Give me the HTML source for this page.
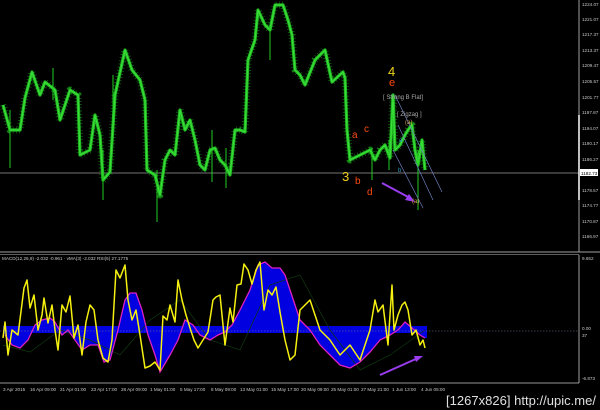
<!DOCTYPE html>
<html><head><meta charset="utf-8"><style>
html,body{margin:0;padding:0;background:#000;width:600px;height:410px;overflow:hidden}
svg{display:block}
text{font-family:"Liberation Sans",sans-serif}
.ax{fill:#c8c8c8;font-size:4.6px}
</style></head><body>
<svg width="600" height="410" viewBox="0 0 600 410">
<defs>
<polyline id="pp" fill="none" points="3,105 10,130 20,130 25,98 32,72 40,95 45,82 55,90 60,120 70,90 78,95 80,155 90,150 95,115 100,135 103,180 110,172 115,95 125,50 132,70 140,80 145,100 147,170 155,175 160,195 165,160 170,150 175,155 180,110 185,130 190,120 195,140 200,165 205,170 210,150 215,148 220,160 225,165 230,175 235,130 240,130 245,132 248,60 255,40 258,10 265,25 270,30 275,5 283,5 288,20 292,35 295,70 300,75 305,85 315,60 325,50 332,82 343,72 345,78 347,130 350,160 360,155 370,150 375,160 380,150 385,145 390,158 393,95 395,150 400,145 405,135 408,130 412,125 415,150 418,165 422,140 425,170"/>
</defs>
<rect width="600" height="410" fill="#000"/>
<line x1="0" y1="173" x2="579" y2="173" stroke="#9a9a9a" stroke-width="0.8"/>
<use href="#pp" stroke="#137a13" stroke-width="7" stroke-dasharray="0.6 2.6" stroke-linejoin="round"/>
<use href="#pp" stroke="#22b822" stroke-width="3.2" stroke-linejoin="round"/>
<use href="#pp" stroke="#3ae03a" stroke-width="1.2" stroke-linejoin="round"/>
<g stroke="#22cc22" stroke-width="1">
<line x1="10" y1="110" x2="10" y2="168"/><line x1="53" y1="68" x2="53" y2="100"/><line x1="103" y1="150" x2="103" y2="200"/>
<line x1="113" y1="75" x2="113" y2="120"/><line x1="157" y1="170" x2="157" y2="222"/><line x1="212" y1="130" x2="212" y2="182"/>
<line x1="226" y1="148" x2="226" y2="188"/><line x1="270" y1="25" x2="270" y2="60"/><line x1="372" y1="148" x2="372" y2="180"/>
<line x1="389" y1="140" x2="389" y2="170"/><line x1="418" y1="150" x2="418" y2="210"/>
</g>
<g stroke="#7080c0" stroke-width="0.7">
<line x1="395" y1="95" x2="442" y2="192"/><line x1="398" y1="125" x2="433" y2="200"/><line x1="393" y1="150" x2="423" y2="208"/>
</g>
<g stroke="#9a3cf0" stroke-width="2" fill="#9a3cf0">
<line x1="382" y1="183" x2="410" y2="198"/><polygon points="415,202 405,200 409,194" stroke="none"/>
<line x1="380" y1="375" x2="418" y2="358"/><polygon points="423,356 414,356 416,362" stroke="none"/>
</g>
<g>
<text x="388" y="76" fill="#f0d020" font-size="13">4</text>
<text x="389" y="86" fill="#ff4a10" font-size="11">e</text>
<text x="383" y="99" fill="#aaaaaa" font-size="6">[ Strong B Flat]</text>
<text x="397" y="116" fill="#aaaaaa" font-size="6">[ Zigzag ]</text>
<text x="352" y="138" fill="#ff4a10" font-size="10">a</text>
<text x="364" y="132" fill="#ff4a10" font-size="10">c</text>
<text x="342" y="181" fill="#f0d020" font-size="13">3</text>
<text x="355" y="184" fill="#ff4a10" font-size="10">b</text>
<text x="367" y="195" fill="#ff4a10" font-size="10">d</text>
<text x="398" y="172" fill="#30a0d0" font-size="6">b</text>
<text x="399" y="142" fill="#30a0d0" font-size="6">a</text>
<text x="405" y="124" fill="#d0a050" font-size="6">(a)</text>
<text x="412" y="203" fill="#d0a050" font-size="6">(a)</text>
</g>
<line x1="579" y1="0" x2="579" y2="252" stroke="#c8c8c8" stroke-width="0.8"/>
<line x1="579" y1="115" x2="579" y2="200" stroke="#ffffff" stroke-width="1.5"/>
<g class="ax">
<text x="582" y="6">1224.07</text><text x="582" y="21">1221.07</text><text x="582" y="36">1217.37</text>
<text x="582" y="52">1213.37</text><text x="582" y="67">1209.47</text><text x="582" y="83">1205.57</text>
<text x="582" y="99">1201.77</text><text x="582" y="114">1197.87</text><text x="582" y="130">1194.07</text>
<text x="582" y="145">1190.17</text><text x="582" y="161">1186.27</text>
<text x="582" y="192">1178.57</text><text x="582" y="207">1174.77</text><text x="582" y="223">1170.87</text><text x="582" y="238">1166.97</text>
</g>
<rect x="580" y="169" width="18" height="7" fill="#ffffff"/>
<text x="581" y="175" font-size="4.6" fill="#000">1182.73</text>
<line x1="0" y1="252" x2="600" y2="252" stroke="#a0a0a0" stroke-width="1"/>
<line x1="0" y1="254.5" x2="579" y2="254.5" stroke="#808080" stroke-width="0.8"/>
<text x="2" y="260" font-size="4.6" fill="#c8c8c8">MACD(12,26,9) -2.032 -0.961 · vMA(3) -2.032  RSI(5) 27.1775</text>
<polygon fill="#0000e0" points="3,330 5,335 12,345 20,348 28,340 35,325 42,320 50,318 55,322 62,335 68,330 75,340 82,350 90,345 98,345 104,362 110,360 118,330 125,300 130,293 136,293 142,310 148,335 155,355 160,372 170,355 178,340 185,320 193,325 200,335 210,340 218,335 225,332 232,325 240,310 250,290 258,265 265,262 272,268 280,268 285,275 290,290 295,305 300,320 310,330 320,345 330,355 340,365 350,368 360,362 370,352 380,340 390,335 398,330 405,322 412,328 420,335 425,338 427,338 427,330"/>
<rect x="3" y="326" width="424" height="7" fill="#0000e0"/>
<line x1="0" y1="331" x2="579" y2="331" stroke="#7a7a9a" stroke-width="0.6" stroke-dasharray="1.5,1.5"/>
<polyline fill="none" stroke="#103a10" stroke-width="0.7" points="3,345 30,352 60,330 90,340 120,355 150,320 180,300 210,340 240,350 270,285 300,275 330,330 360,370 390,355 425,330"/>
<polyline fill="none" stroke="#e020c0" stroke-width="1.3" points="5,335 12,345 20,348 28,340 35,325 42,320 50,318 55,322 62,335 68,330 75,340 82,350 90,345 98,345 104,362 110,360 118,330 125,300 130,293 136,293 142,310 148,335 155,355 160,372 170,355 178,340 185,320 193,325 200,335 210,340 218,335 225,332 232,325 240,310 250,290 258,265 265,262 272,268 280,268 285,275 290,290 295,305 300,320 310,330 320,345 330,355 340,365 350,368 360,362 370,352 380,340 390,335 398,330 405,322 412,328 420,335 425,338"/>
<polyline fill="none" stroke="#f5f010" stroke-width="1.5" stroke-linejoin="round" points="3,338 5,322 8,355 12,330 18,335 24,288 27,280 30,308 34,295 38,330 42,315 44,298 48,323 52,305 55,330 58,350 62,305 66,312 70,296 74,338 78,325 82,355 86,322 90,305 94,310 98,340 103,358 108,362 112,340 116,270 120,278 125,265 128,300 132,320 136,310 140,335 145,368 150,366 155,362 160,370 163,316 167,320 170,305 175,322 178,280 182,300 186,315 190,328 194,340 198,348 203,340 208,332 213,300 216,297 220,295 225,345 230,308 233,322 237,285 241,284 244,264 248,270 252,284 256,270 260,262 264,310 268,290 272,295 276,287 280,312 285,340 290,360 295,355 300,310 310,300 320,330 330,340 340,355 350,345 360,360 370,330 375,300 378,312 383,305 388,345 392,285 394,330 398,315 402,305 405,302 408,310 412,335 416,330 420,345 423,340 425,348"/>
<line x1="579" y1="255" x2="579" y2="383" stroke="#c8c8c8" stroke-width="0.8"/>
<g class="ax">
<text x="582" y="260">9.652</text><text x="582" y="330">0.00</text><text x="582" y="337">37</text><text x="582" y="380">-6.873</text>
</g>
<line x1="0" y1="383" x2="579" y2="383" stroke="#c8c8c8" stroke-width="0.8"/>
<g class="ax">
<text x="3" y="391">3 Apr 2015</text><text x="30" y="391">16 Apr 09:00</text><text x="60" y="391">21 Apr 01:00</text>
<text x="91" y="391">23 Apr 17:00</text><text x="121" y="391">28 Apr 09:00</text><text x="150" y="391">1 May 01:00</text>
<text x="180" y="391">5 May 17:00</text><text x="211" y="391">8 May 09:00</text><text x="240" y="391">13 May 01:00</text>
<text x="271" y="391">15 May 17:00</text><text x="301" y="391">20 May 09:00</text><text x="331" y="391">25 May 01:00</text>
<text x="361" y="391">27 May 21:00</text><text x="392" y="391">1 Jun 13:00</text><text x="421" y="391">4 Jun 05:00</text>
</g>
<text x="446" y="405" font-family="Liberation Mono" font-size="13" fill="#e0e0e0" textLength="150">[1267x826] http://upic.me/</text>
</svg>
</body></html>
